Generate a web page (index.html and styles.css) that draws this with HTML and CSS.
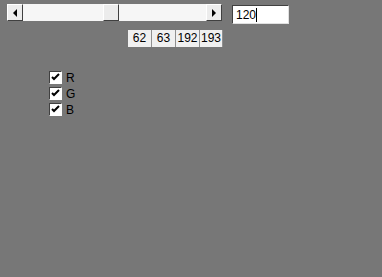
FILE: index.html
```html
<!DOCTYPE html>
<html lang="en">
<head>
    <meta charset="UTF-8">
    <title>RGB Slider</title>
    <link rel="stylesheet" href="styles.css">
</head>
<body>
    <div class="top-row">
        <!-- Scrollbar -->
        <div class="scrollbar">
            <div class="sb-btn"><span class="arrow-left"></span></div>
            <div class="sb-track">
                <div class="sb-thumb"></div>
            </div>
            <div class="sb-btn"><span class="arrow-right"></span></div>
        </div>
        <div class="value-box">120<span class="caret"></span></div>
    </div>
    <div class="cells">
        <div class="cell">62</div>
        <div class="cell">63</div>
        <div class="cell">192</div>
        <div class="cell">193</div>
    </div>
    <div class="checks">
        <label class="check-row"><span class="box"><svg width="9" height="9" viewBox="0 0 9 9"><path d="M1 4 L3 6 L8 1" fill="none" stroke="#000" stroke-width="2"/></svg></span>R</label>
        <label class="check-row"><span class="box"><svg width="9" height="9" viewBox="0 0 9 9"><path d="M1 4 L3 6 L8 1" fill="none" stroke="#000" stroke-width="2"/></svg></span>G</label>
        <label class="check-row"><span class="box"><svg width="9" height="9" viewBox="0 0 9 9"><path d="M1 4 L3 6 L8 1" fill="none" stroke="#000" stroke-width="2"/></svg></span>B</label>
    </div>
</body>
</html>
```
FILE: styles.css
```css
body {
    margin: 0;
    background: #777777;
    font-family: "Liberation Sans", Arial, sans-serif;
    font-size: 12px;
    color: #000;
}

/* Top row */
.top-row {
    display: flex;
    align-items: flex-start;
    padding: 4px 0 0 7px;
}

.scrollbar {
    display: flex;
    width: 215px;
    height: 17px;
}

.sb-btn {
    width: 16px;
    height: 17px;
    box-sizing: border-box;
    background: #ececec;
    border-top: 1px solid #fff;
    border-left: 1px solid #fff;
    border-right: 1px solid #404040;
    border-bottom: 1px solid #404040;
    display: flex;
    justify-content: center;
    align-items: center;
}

.arrow-left {
    width: 0;
    height: 0;
    border-top: 4px solid transparent;
    border-bottom: 4px solid transparent;
    border-right: 4px solid #000;
}

.arrow-right {
    width: 0;
    height: 0;
    border-top: 4px solid transparent;
    border-bottom: 4px solid transparent;
    border-left: 4px solid #000;
}

.sb-track {
    flex: 1;
    background: #f6f6f6;
    padding-left: 80px;
}

.sb-thumb {
    width: 16px;
    height: 17px;
    box-sizing: border-box;
    background: #ececec;
    border-top: 1px solid #fff;
    border-left: 1px solid #fff;
    border-right: 1px solid #404040;
    border-bottom: 1px solid #404040;
}

.value-box {
    margin: 1px 0 0 10px;
    width: 57px;
    height: 19px;
    box-sizing: border-box;
    background: #fff;
    border-top: 1px solid #404040;
    border-left: 1px solid #404040;
    border-right: 1px solid #e0e0e0;
    border-bottom: 1px solid #e0e0e0;
    padding: 2px 0 0 3px;
    font-size: 12px;
    line-height: 14px;
    display: flex;
}

.caret {
    width: 1px;
    height: 14px;
    background: #000;
}

/* Value cells */
.cells {
    display: flex;
    margin: 6px 0 0 128px;
}

.cell {
    width: 24px;
    height: 17px;
    box-sizing: border-box;
    background: #f0f0f0;
    border-right: 1px solid #909090;
    text-align: center;
    font-size: 12px;
    line-height: 17px;
}

.cell:last-child {
    width: 23px;
}

/* Checkboxes */
.checks {
    display: flex;
    flex-direction: column;
    gap: 3px;
    margin: 24px 0 0 49px;
}

.check-row {
    display: flex;
    align-items: center;
    height: 13px;
    font-size: 12px;
}

.box {
    width: 13px;
    height: 13px;
    box-sizing: border-box;
    background: #fff;
    border-top: 1px solid #404040;
    border-left: 1px solid #404040;
    border-right: 1px solid #fff;
    border-bottom: 1px solid #fff;
    display: flex;
    justify-content: center;
    align-items: center;
    margin-right: 4px;
}
```
